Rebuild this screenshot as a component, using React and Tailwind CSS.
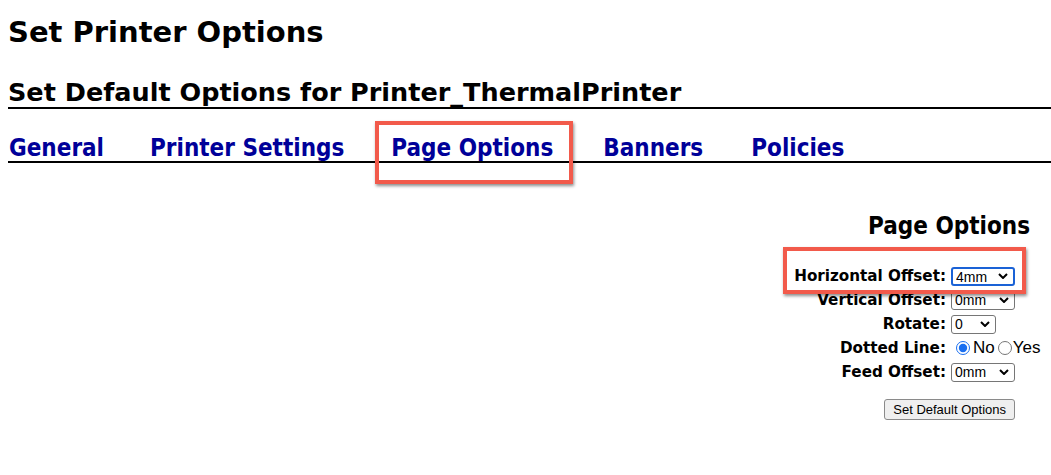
import React from "react";

const F = { fontFamily: '"DejaVu Sans", sans-serif' };

function Sel({ value, w }) {
  return (
    <select
      defaultValue={value}
      className={`h-[19px] ${w} appearance-none rounded-[3px] border border-[#767676] bg-white pl-[3px] text-[14px] leading-[17px] text-black [font-family:'Liberation_Sans',Arial,sans-serif]`}
      style={{
        backgroundImage:
          "url(\"data:image/svg+xml;utf8,<svg xmlns='http://www.w3.org/2000/svg' width='10' height='6'><path d='M1 1l4 4 4-4' fill='none' stroke='black' stroke-width='2'/></svg>\")",
        backgroundRepeat: "no-repeat",
        backgroundPosition: "right 5px center",
      }}
    >
      <option>{value}</option>
    </select>
  );
}

function Row({ label, children }) {
  return (
    <div className="flex items-center justify-end gap-[5px] h-[24px]">
      <span className="text-[15.2px] font-bold text-black">{label}</span>
      <div className="w-[95px] flex items-center">{children}</div>
    </div>
  );
}

export default function App() {
  return (
    <div className="relative w-[1051px] h-[475px] bg-white overflow-hidden" style={F}>
      <div className="pl-[8px]">
        <h1 className="pt-[14px] text-[29px] leading-[36px] font-bold text-black">Set Printer Options</h1>
        <h2 className="mt-[27px] text-[25.5px] leading-[30px] font-bold text-black border-b-2 border-black">
          Set Default Options for Printer_ThermalPrinter
        </h2>
        <div className="mt-[26px] flex border-b-2 border-black text-[24px] leading-[26px] font-bold text-[#000099] font-stretch-condensed">
          <a href="#" className="pl-px">General</a>
          <a href="#" className="ml-[46px]">Printer Settings</a>
          <a href="#" className="ml-[47px]">Page Options</a>
          <a href="#" className="ml-[50px]">Banners</a>
          <a href="#" className="ml-[48px]">Policies</a>
        </div>
      </div>

      <div className="mt-[48px] pr-[21px] flex flex-col items-end">
        <h3 className="text-[24px] leading-[30px] font-bold text-black font-stretch-condensed">Page Options</h3>
      </div>
      <div className="mt-[23px] pr-[5px] flex flex-col items-end">
        <Row label="Horizontal Offset:">
          <Sel value="4mm" w="w-[64px] !border-[#1a62d6] !border-2" />
        </Row>
        <Row label="Vertical Offset:">
          <Sel value="0mm" w="w-[64px]" />
        </Row>
        <Row label="Rotate:">
          <Sel value="0" w="w-[45px]" />
        </Row>
        <Row label="Dotted Line:">
          <div className="flex items-center text-[17px] text-black [font-family:'Liberation_Sans',Arial,sans-serif]">
            <input type="radio" name="d" defaultChecked className="m-0 ml-[5px] mr-[3px] w-[14px] h-[14px] accent-[#1a6ff0]" />
            <span>No</span>
            <input type="radio" name="d" className="m-0 ml-[3px] mr-[1px] w-[14px] h-[14px]" />
            <span>Yes</span>
          </div>
        </Row>
        <Row label="Feed Offset:">
          <Sel value="0mm" w="w-[64px]" />
        </Row>
      </div>
      <div className="mt-[15px] pr-[36px] flex justify-end">
        <button className="h-[21px] px-[8px] rounded-[3px] border border-[#8a8a8a] bg-[#efefef] text-[13px] text-black leading-[17px] [font-family:'Liberation_Sans',Arial,sans-serif]">
          Set Default Options
        </button>
      </div>

      <div className="absolute left-[375px] top-[121px] w-[198px] h-[63px] border-[4px] border-[#f25a4b] shadow-[1px_2px_3px_rgba(0,0,0,0.45)]" />
      <div className="absolute left-[783px] top-[247px] w-[243px] h-[47px] border-[4px] border-[#f25a4b] shadow-[1px_2px_3px_rgba(0,0,0,0.45)]" />
    </div>
  );
}
